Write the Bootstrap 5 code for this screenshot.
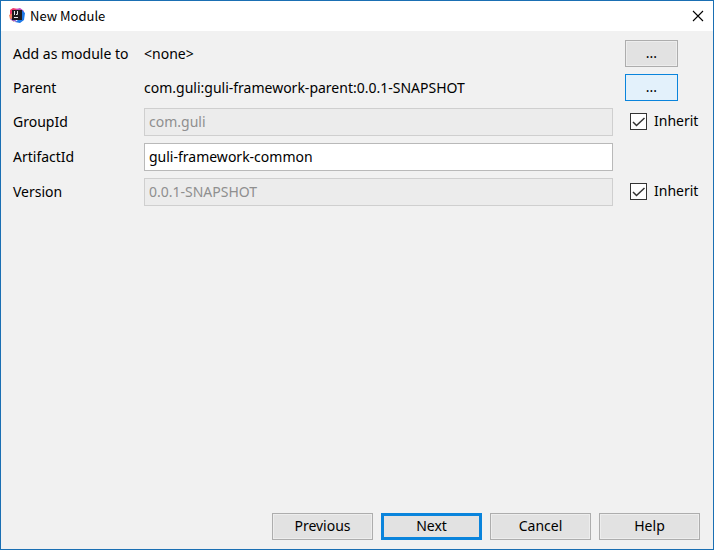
<!DOCTYPE html>
<html lang="en">
<head>
<meta charset="utf-8">
<meta name="viewport" content="width=device-width, initial-scale=1">
<title>New Module</title>
<link href="https://cdn.jsdelivr.net/npm/bootstrap@5.3.0/dist/css/bootstrap.min.css" rel="stylesheet">
<style>
  body { font-family: "Noto Sans", "Open Sans", sans-serif; font-size: 14px; line-height: 20px; color: #000; background: #f1f1f1; }
  .dialog { border: 1px solid #1a6fb3; background: #f1f1f1; }
  .titlebar { height: 30px; padding: 0 7px 0 8px; background: #fff; }
  .titlebar h1 { font-family: "Noto Sans CJK SC", "Noto Sans", sans-serif; font-size: 13px; line-height: 16px; font-weight: 400; padding-left: 5px; }
  .close-btn { width: 16px; height: 16px; }
  .module-form { padding: 9px 12px; gap: 7px; }
  .form-line { display: grid; grid-template-columns: 131px 1fr 88px; align-items: center; min-height: 27px; }
  .form-line.field { min-height: 28px; }
  .side { padding-left: 12px; }
  .form-line .form-control { height: 28px; padding: 0 4px 2px; font-size: 14px; line-height: 20px; color: #000; background: #fff; border: 1px solid #b9b9b9; }
  .form-line .form-control:disabled { color: #8f8f8f; background: #ececec; border-color: #cfcfcf; }
  .dlg-btn { --bs-btn-font-size: 14px; --bs-btn-line-height: 20px;
    --bs-btn-color: #000; --bs-btn-bg: #e2e2e2; --bs-btn-border-color: #adadad; --bs-btn-border-radius: 0;
    --bs-btn-hover-color: #000; --bs-btn-hover-bg: #e3f1fb; --bs-btn-hover-border-color: #0a84dc;
    width: 101px; height: 27px; padding: 0 0 2px; box-shadow: inset 0 0 0 1px #ededed; }
  .dlg-btn.browse { width: 53px; }
  .dlg-btn.hot { --bs-btn-bg: #e3f1fb; --bs-btn-border-color: #0a84dc; box-shadow: none; }
  .dlg-btn.default { border: 3px solid #0a84dc; box-shadow: none; }
  .inherit { gap: 7px; padding: 0 0 2px 17px; }
  .inherit .form-check-input { width: 17px; height: 17px; margin: 0; border: 1px solid #333; border-radius: 0; background-color: #fff; background-size: 15px 15px; }
  .inherit .form-check-input:checked { background-image: url("data:image/svg+xml,%3Csvg xmlns='http://www.w3.org/2000/svg' viewBox='0 0 15 15'%3E%3Cpath d='M2 8L5.500 11.500L13.500 4' fill='none' stroke='%23333' stroke-width='1.5'/%3E%3C/svg%3E"); }
  .actions { gap: 8px; padding: 0 13px 9px; }
</style>
<script src="https://cdn.jsdelivr.net/npm/bootstrap@5.3.0/dist/js/bootstrap.bundle.min.js"></script>
</head>
<body>
<div class="dialog d-flex flex-column min-vh-100">
  <header class="titlebar d-flex align-items-center">
    <svg width="16" height="16" viewBox="0 0 16 16" aria-hidden="true">
      <path d="M1 2L4 0L9 1L7 8L1 9Z" fill="#f0386b"/>
      <path d="M0 7L4 5L5 14L1 11Z" fill="#f4845f"/>
      <path d="M7 1L11 0L15 3L13 8L8 5Z" fill="#c04bbd"/>
      <path d="M13 2L16 5L15 12L11 15L6 14L12 10Z" fill="#1d78e6"/>
      <path d="M1 11L5 10L8 14L4 13Z" fill="#8a5cc9"/>
      <path d="M3 2H13V12H3Z" fill="#1c1a1c"/>
      <path d="M5.500 3V7M8.500 3V6.500H7M5 9.500H9" fill="none" stroke="#e8e8e8"/>
    </svg>
    <h1 class="mb-0 flex-grow-1">New Module</h1>
    <button type="button" class="close-btn btn p-0 border-0 d-flex align-items-center justify-content-center" aria-label="Close">
      <svg width="12" height="12" viewBox="0 0 12 12" aria-hidden="true"><path d="M1 1L11 11M11 1L1 11" fill="none" stroke="#000" stroke-width="1.1"/></svg>
    </button>
  </header>
  <form id="module" class="module-form d-flex flex-column flex-grow-1">
    <div class="form-line">
      <span>Add as module to</span><span>&lt;none&gt;</span>
      <div class="side"><button type="button" class="btn dlg-btn browse d-block" aria-label="Choose module">...</button></div>
    </div>
    <div class="form-line">
      <span>Parent</span><span>com.guli:guli-framework-parent:0.0.1-SNAPSHOT</span>
      <div class="side"><button type="button" class="btn dlg-btn browse hot d-block" aria-label="Choose parent">...</button></div>
    </div>
    <div class="form-line field">
      <label for="group">GroupId</label>
      <input id="group" type="text" class="form-control rounded-0" value="com.guli" disabled>
      <div class="inherit d-flex align-items-center"><input id="inherit-group" class="form-check-input flex-shrink-0" type="checkbox" checked><label for="inherit-group">Inherit</label></div>
    </div>
    <div class="form-line field">
      <label for="artifact">ArtifactId</label>
      <input id="artifact" type="text" class="form-control rounded-0" value="guli-framework-common">
    </div>
    <div class="form-line field">
      <label for="version">Version</label>
      <input id="version" type="text" class="form-control rounded-0" value="0.0.1-SNAPSHOT" disabled>
      <div class="inherit d-flex align-items-center"><input id="inherit-version" class="form-check-input flex-shrink-0" type="checkbox" checked><label for="inherit-version">Inherit</label></div>
    </div>
  </form>
  <footer class="actions d-flex justify-content-end">
    <button type="button" class="btn dlg-btn">Previous</button>
    <button type="submit" form="module" class="btn dlg-btn default">Next</button>
    <button type="button" class="btn dlg-btn">Cancel</button>
    <button type="button" class="btn dlg-btn">Help</button>
  </footer>
</div>
</body>
</html>
